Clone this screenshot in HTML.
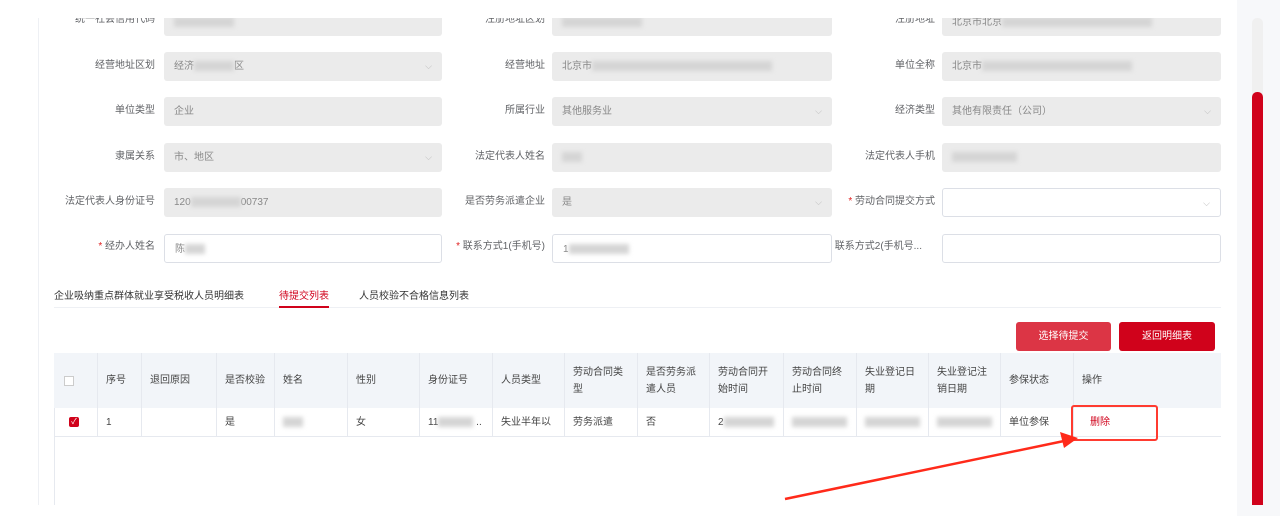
<!DOCTYPE html>
<html><head><meta charset="utf-8"><style>
*{margin:0;padding:0;box-sizing:border-box}
body{width:1280px;height:516px;background:#fff;position:relative;overflow:hidden;font-family:"Liberation Sans","Noto Sans CJK SC",sans-serif;font-size:10px;color:#555}
.abs{position:absolute}
.lbl{position:absolute;text-align:right;width:130px;font-size:10px;color:#606266;line-height:28px}
.in{position:absolute;height:29px;background:#ebebeb;border-radius:3px;font-size:10px;color:#888;line-height:29px;padding-left:10px}
.in.w{background:#fff;border:1px solid #dcdfe6}
.ar{position:absolute;right:10px;top:0;color:#bbb;font-size:9px}
.blur{display:inline-block;background:#d5d5d5;filter:blur(2px);height:10px;vertical-align:middle}
.req{color:#e02020}
.th{position:absolute;top:353px;height:55px;background:#f2f5f9;border-right:1px solid #e6e9ef;font-size:10px;color:#444;padding:0 8px;display:flex;align-items:center;line-height:17px}
.td{position:absolute;top:408px;height:29px;border-right:1px solid #e6e9ef;border-bottom:1px solid #e6e9ef;font-size:10px;color:#444;padding:0 8px;line-height:29px;white-space:nowrap;overflow:hidden}
</style></head><body>
<div class="abs" style="left:38px;top:18px;width:1199px;height:487px;border-left:1px solid #eef0f4;background:#fff"></div>
<div class="abs" style="left:1237px;top:0;width:43px;height:516px;background:#f7f8fa"></div>
<div class="abs" style="left:1252px;top:18px;width:11px;height:487px;background:#f0f0f0;border-radius:5px"></div>
<div class="abs" style="left:1252px;top:92px;width:11px;height:413px;background:#d0021b;border-radius:5px 5px 0 0"></div>

<!-- row1 -->
<div class="in" style="left:164px;top:8px;width:278px;height:28px"><span class="blur" style="width:60px"></span></div>
<div class="lbl" style="left:25px;top:6px">统一社会信用代码</div>
<div class="lbl" style="left:415px;top:6px">注册地址区划</div>
<div class="in" style="left:552px;top:8px;width:280px;height:28px"><span class="blur" style="width:80px"></span></div>
<div class="lbl" style="left:805px;top:6px">注册地址</div>
<div class="in" style="left:942px;top:8px;width:279px;height:28px">北京市北京<span class="blur" style="width:150px"></span></div>
<div class="abs" style="left:0;top:0;width:1237px;height:18px;background:#fff"></div>
<!-- row2 -->
<div class="lbl" style="left:25px;top:52px">经营地址区划</div>
<div class="in" style="left:164px;top:52px;width:278px">经济<span class="blur" style="width:40px"></span>区<span class="ar">⌵</span></div>
<div class="lbl" style="left:415px;top:52px">经营地址</div>
<div class="in" style="left:552px;top:52px;width:280px">北京市<span class="blur" style="width:180px"></span></div>
<div class="lbl" style="left:805px;top:52px">单位全称</div>
<div class="in" style="left:942px;top:52px;width:279px">北京市<span class="blur" style="width:150px"></span></div>
<!-- row3 -->
<div class="lbl" style="left:25px;top:97px">单位类型</div>
<div class="in" style="left:164px;top:97px;width:278px">企业</div>
<div class="lbl" style="left:415px;top:97px">所属行业</div>
<div class="in" style="left:552px;top:97px;width:280px">其他服务业<span class="ar">⌵</span></div>
<div class="lbl" style="left:805px;top:97px">经济类型</div>
<div class="in" style="left:942px;top:97px;width:279px">其他有限责任（公司）<span class="ar">⌵</span></div>
<!-- row4 -->
<div class="lbl" style="left:25px;top:143px">隶属关系</div>
<div class="in" style="left:164px;top:143px;width:278px">市、地区<span class="ar">⌵</span></div>
<div class="lbl" style="left:415px;top:143px">法定代表人姓名</div>
<div class="in" style="left:552px;top:143px;width:280px"><span class="blur" style="width:20px"></span></div>
<div class="lbl" style="left:805px;top:143px">法定代表人手机</div>
<div class="in" style="left:942px;top:143px;width:279px"><span class="blur" style="width:65px"></span></div>
<!-- row5 -->
<div class="lbl" style="left:25px;top:188px">法定代表人身份证号</div>
<div class="in" style="left:164px;top:188px;width:278px">120<span class="blur" style="width:50px"></span>00737</div>
<div class="lbl" style="left:415px;top:188px">是否劳务派遣企业</div>
<div class="in" style="left:552px;top:188px;width:280px">是<span class="ar">⌵</span></div>
<div class="lbl" style="left:805px;top:188px"><span class="req">* </span>劳动合同提交方式</div>
<div class="in w" style="left:942px;top:188px;width:279px"><span class="ar">⌵</span></div>
<!-- row6 -->
<div class="lbl" style="left:25px;top:233px"><span class="req">* </span>经办人姓名</div>
<div class="in w" style="left:164px;top:234px;width:278px">陈<span class="blur" style="width:20px"></span></div>
<div class="lbl" style="left:415px;top:233px"><span class="req">* </span>联系方式1(手机号)</div>
<div class="in w" style="left:552px;top:234px;width:280px">1<span class="blur" style="width:60px"></span></div>
<div class="lbl" style="left:792px;top:233px">联系方式2(手机号...</div>
<div class="in w" style="left:942px;top:234px;width:279px"></div>

<!-- tabs -->
<div class="abs" style="left:54px;top:307px;width:1167px;height:1px;background:#eef0f4"></div>
<div class="abs" style="left:54px;top:287px;color:#333">企业吸纳重点群体就业享受税收人员明细表</div>
<div class="abs" style="left:279px;top:287px;color:#d0021b">待提交列表</div>
<div class="abs" style="left:279px;top:306px;width:50px;height:2px;background:#d0021b"></div>
<div class="abs" style="left:359px;top:287px;color:#333">人员校验不合格信息列表</div>
<!-- buttons -->
<div class="abs" style="left:1016px;top:322px;width:95px;height:29px;background:#dc3545;border-radius:3px;color:#fff;text-align:center;line-height:29px">选择待提交</div>
<div class="abs" style="left:1119px;top:322px;width:96px;height:29px;background:#d0021b;border-radius:3px;color:#fff;text-align:center;line-height:29px">返回明细表</div>
<!-- table -->
<div class="abs" style="left:54px;top:353px;width:1167px;height:152px;border-left:1px solid #e6e9ef"></div>
<div class="th" style="left:54px;width:44px"><span style="display:inline-block;width:10px;height:10px;border:1px solid #ccc;background:#fff;margin-left:2px"></span></div>
<div class="th" style="left:98px;width:44px">序号</div>
<div class="th" style="left:142px;width:75px">退回原因</div>
<div class="th" style="left:217px;width:58px">是否校验</div>
<div class="th" style="left:275px;width:73px">姓名</div>
<div class="th" style="left:348px;width:72px">性别</div>
<div class="th" style="left:420px;width:73px">身份证号</div>
<div class="th" style="left:493px;width:72px">人员类型</div>
<div class="th" style="left:565px;width:73px">劳动合同类<br>型</div>
<div class="th" style="left:638px;width:72px">是否劳务派<br>遣人员</div>
<div class="th" style="left:710px;width:74px">劳动合同开<br>始时间</div>
<div class="th" style="left:784px;width:73px">劳动合同终<br>止时间</div>
<div class="th" style="left:857px;width:72px">失业登记日<br>期</div>
<div class="th" style="left:929px;width:72px">失业登记注<br>销日期</div>
<div class="th" style="left:1001px;width:73px">参保状态</div>
<div class="th" style="left:1074px;width:147px;border-right:none">操作</div>

<div class="td" style="left:54px;width:44px"><span style="display:inline-block;width:10px;height:10px;background:#d0021b;border-radius:2px;color:#fff;font-size:8px;line-height:10px;text-align:center;margin-left:7px;vertical-align:middle">✓</span></div>
<div class="td" style="left:98px;width:44px">1</div>
<div class="td" style="left:142px;width:75px"></div>
<div class="td" style="left:217px;width:58px">是</div>
<div class="td" style="left:275px;width:73px"><span class="blur" style="width:20px"></span></div>
<div class="td" style="left:348px;width:72px">女</div>
<div class="td" style="left:420px;width:73px">11<span class="blur" style="width:35px"></span> ..</div>
<div class="td" style="left:493px;width:72px">失业半年以</div>
<div class="td" style="left:565px;width:73px">劳务派遣</div>
<div class="td" style="left:638px;width:72px">否</div>
<div class="td" style="left:710px;width:74px">2<span class="blur" style="width:50px"></span></div>
<div class="td" style="left:784px;width:73px"><span class="blur" style="width:55px"></span></div>
<div class="td" style="left:857px;width:72px"><span class="blur" style="width:55px"></span></div>
<div class="td" style="left:929px;width:72px"><span class="blur" style="width:55px"></span></div>
<div class="td" style="left:1001px;width:73px">单位参保</div>
<div class="td" style="left:1074px;width:147px;border-right:none;color:#d0021b;padding-left:16px">删除</div>

<div class="abs" style="left:1071px;top:405px;width:87px;height:36px;border:2px solid #ff3b30;border-radius:3px"></div>
<svg class="abs" style="left:0;top:0" width="1280" height="516"><line x1="785" y1="499" x2="1064" y2="441" stroke="#ff2a1a" stroke-width="2.5"/><polygon points="1078,438 1060,432 1064,448" fill="#ff2a1a"/></svg>
</body></html>
